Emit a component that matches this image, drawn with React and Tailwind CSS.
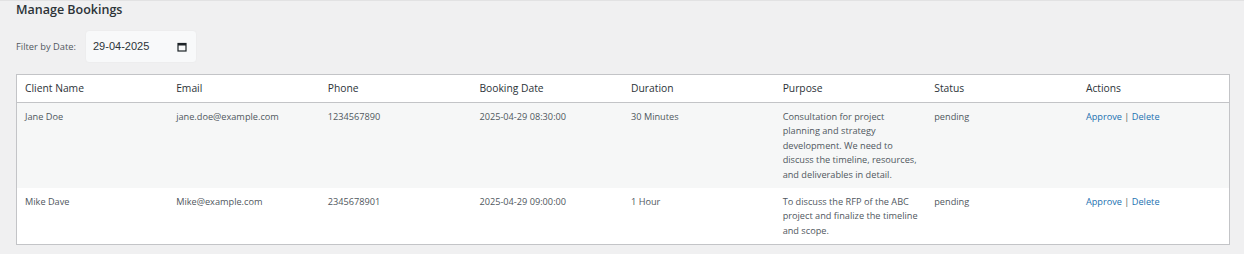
import React from "react";

const bookings = [
  {
    name: "Jane Doe",
    email: "jane.doe@example.com",
    phone: "1234567890",
    date: "2025-04-29 08:30:00",
    duration: "30 Minutes",
    purpose:
      "Consultation for project planning and strategy development. We need to discuss the timeline, resources, and deliverables in detail.",
    status: "pending",
  },
  {
    name: "Mike Dave",
    email: "Mike@example.com",
    phone: "2345678901",
    date: "2025-04-29 09:00:00",
    duration: "1 Hour",
    purpose: "To discuss the RFP of the ABC project and finalize the timeline and scope.",
    status: "pending",
  },
];

const headers = ["Client Name", "Email", "Phone", "Booking Date", "Duration", "Purpose", "Status", "Actions"];

export default function App() {
  return (
    <div className="w-[1244px] h-[254px] bg-[#f0f0f1] border-t border-[#e2e2e3] px-4 font-['Open_Sans',sans-serif] text-[#50575e]">
      {/* Title */}
      <h1 className="text-[12.5px] font-semibold text-[#2c3338] leading-[18px]">Manage Bookings</h1>

      {/* Filter */}
      <div className="flex items-center gap-[8px] mt-[11px]">
        <label className="w-[61px] text-[9.3px] text-[#50575e] whitespace-nowrap">Filter by Date:</label>
        <div className="w-[112px] h-[33px] bg-[#f8f9fa] rounded-[4px] border border-[#ededee] flex items-center justify-between pl-[7px] pr-[9px]">
          <span className="text-[11px] text-[#2c3338] font-['Liberation_Sans',sans-serif]">29-04-2025</span>
          <svg width="10" height="10" viewBox="0 0 10 10">
            <rect x="1" y="1.5" width="8" height="7.5" fill="none" stroke="#1d2327" strokeWidth="1.2" />
            <rect x="1" y="1.5" width="8" height="2" fill="#1d2327" />
          </svg>
        </div>
      </div>

      {/* Table */}
      <table className="w-[1214px] mt-[11px] table-fixed border border-[#c3c4c7] bg-white border-collapse">
        <thead>
          <tr className="border-b border-[#c3c4c7]">
            {headers.map((h) => (
              <th key={h} className="text-left font-normal text-[10.3px] text-[#2c3338] px-2 h-[28px]">
                {h}
              </th>
            ))}
          </tr>
        </thead>
        <tbody>
          {bookings.map((b, i) => (
            <tr key={b.name} className={i % 2 === 0 ? "bg-[#f6f7f7]" : "bg-white"}>
              {[b.name, b.email, b.phone, b.date, b.duration, b.purpose, b.status].map((v, j) => (
                <td key={j} className="align-top text-[9.2px] leading-[14.4px] px-2 pt-[7px] pb-[6px]">
                  {v}
                </td>
              ))}
              <td className="align-top text-[9.2px] leading-[14.4px] px-2 pt-[7px] pb-[6px]">
                <a className="text-[#2271b1]">Approve</a> | <a className="text-[#2271b1]">Delete</a>
              </td>
            </tr>
          ))}
        </tbody>
      </table>
    </div>
  );
}
